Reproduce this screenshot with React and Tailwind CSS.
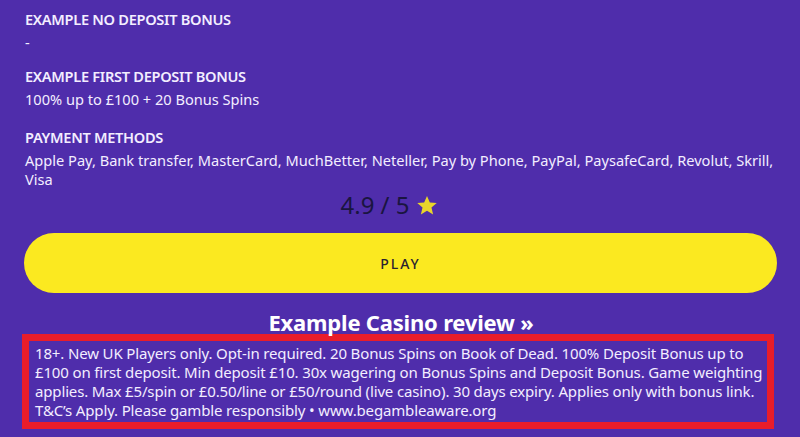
import React from "react";

const font = { fontFamily: '"Noto Sans", "Open Sans", sans-serif' };

const details = [
  { label: "EXAMPLE NO DEPOSIT BONUS", lines: ["-"], gap: "mt-0" },
  { label: "EXAMPLE FIRST DEPOSIT BONUS", lines: ["100% up to £100 + 20 Bonus Spins"], gap: "mt-[14px]" },
  {
    label: "PAYMENT METHODS",
    lines: [
      "Apple Pay, Bank transfer, MasterCard, MuchBetter, Neteller, Pay by Phone, PayPal, PaysafeCard, Revolut, Skrill,",
      "Visa",
    ],
    gap: "mt-[18px]",
  },
];

const terms = [
  "18+. New UK Players only. Opt-in required. 20 Bonus Spins on Book of Dead. 100% Deposit Bonus up to",
  "£100 on first deposit. Min deposit £10. 30x wagering on Bonus Spins and Deposit Bonus. Game weighting",
  "applies. Max £5/spin or £0.50/line or £50/round (live casino). 30 days expiry. Applies only with bonus link.",
  "T&C’s Apply. Please gamble responsibly • www.begambleaware.org",
];

function Star() {
  return (
    <svg width="22" height="21" viewBox="0 0 24 23" className="inline-block">
      <path
        d="M12 1l3.1 7.1 7.6.7-5.8 5 1.8 7.5L12 17.3l-6.7 4 1.8-7.5-5.8-5 7.6-.7z"
        fill="#e9d62b"
      />
    </svg>
  );
}

export default function App() {
  return (
    <div className="w-[800px] h-[437px] overflow-hidden bg-[#4f2dab] text-[#f3eeff]" style={font}>
      <div className="pl-[25px] pr-[23px] pt-[9px]">
        {details.map(({ label, lines, gap }) => (
          <div key={label} className={gap}>
            <div className="text-[14.6px] leading-[20px] font-semibold tracking-[-0.3px]">{label}</div>
            <div className="mt-[4px]">
              {lines.map((line) => (
                <p key={line} className="text-[14.6px] leading-[19px] whitespace-nowrap">
                  {line}
                </p>
              ))}
            </div>
          </div>
        ))}

        <div className="mt-[4px] pr-[24px] flex items-center justify-center gap-[6px] text-[24px] leading-[24px] text-[#1a1540]">
          <span>4.9 / 5</span>
          <Star />
        </div>

        <button className="mt-[16px] w-[753px] -ml-px h-[60px] rounded-full bg-[#fbe920] text-[#2a2230] text-[14px] tracking-[2px] font-medium">
          PLAY
        </button>

        <div className="mt-[17px] text-center text-[22px] leading-[24px] font-bold text-white tracking-[-0.2px]">
          Example Casino review »
        </div>
      </div>

      <div className="ml-[22px] w-[752px] h-[95px] border-[7px] border-[#e91d2a] pl-[6px] pt-[3px]">
        {terms.map((line) => (
          <p key={line} className="text-[15px] leading-[19px] tracking-[-0.15px] whitespace-nowrap">
            {line}
          </p>
        ))}
      </div>
    </div>
  );
}
